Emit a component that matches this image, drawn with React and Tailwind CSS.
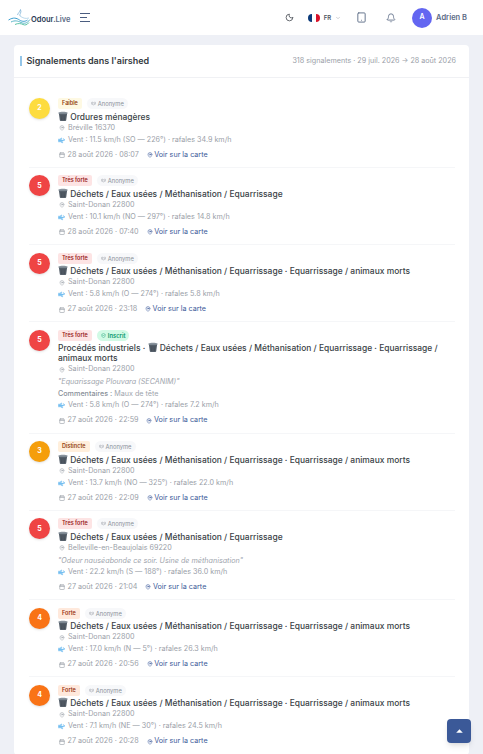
import { Moon, ChevronDown, Tablet, Bell, Calendar, MapPin, Wind, VenetianMask, ShieldCheck } from 'lucide-react';

const ALL = 'Déchets / Eaux usées / Méthanisation / Equarrissage · Equarrissage / animaux morts';

const levels = {
  2: { label: 'Faible', circle: 'bg-[#fddc3f]', badge: 'bg-[#fef9e3] text-[#92400e]' },
  3: { label: 'Distincte', circle: 'bg-[#f59e0b]', badge: 'bg-[#ffefdc] text-[#92400e]' },
  4: { label: 'Forte', circle: 'bg-[#f97316]', badge: 'bg-[#ffe9dc] text-[#9a3412]' },
  5: { label: 'Très forte', circle: 'bg-[#ef4444]', badge: 'bg-[#fde4e4] text-[#991b1b]' },
};

const reports = [
  { level: 2, title: 'Ordures ménagères', place: 'Bréville 16370', wind: 'Vent : 11.5 km/h (SO — 226°) · rafales 34.9 km/h', date: '28 août 2026 · 08:07' },
  { level: 5, title: 'Déchets / Eaux usées / Méthanisation / Equarrissage', place: 'Saint-Donan 22800', wind: 'Vent : 10.1 km/h (NO — 297°) · rafales 14.8 km/h', date: '28 août 2026 · 07:40' },
  { level: 5, title: ALL, place: 'Saint-Donan 22800', wind: 'Vent : 5.8 km/h (O — 274°) · rafales 5.8 km/h', date: '27 août 2026 · 23:18' },
  {
    level: 5,
    inscrit: true,
    prefix: 'Procédés industriels · ',
    title: ALL,
    place: 'Saint-Donan 22800',
    quote: '"Equarissage Plouvara (SECANIM)"',
    comment: 'Maux de tête',
    wind: 'Vent : 5.8 km/h (O — 274°) · rafales 7.2 km/h',
    date: '27 août 2026 · 22:59',
  },
  { level: 3, title: ALL, place: 'Saint-Donan 22800', wind: 'Vent : 13.7 km/h (NO — 325°) · rafales 22.0 km/h', date: '27 août 2026 · 22:09' },
  {
    level: 5,
    title: 'Déchets / Eaux usées / Méthanisation / Equarrissage',
    place: 'Belleville-en-Beaujolais 69220',
    quote: '"Odeur nauséabonde ce soir. Usine de méthanisation"',
    wind: 'Vent : 22.2 km/h (S — 188°) · rafales 36.0 km/h',
    date: '27 août 2026 · 21:04',
  },
  { level: 4, title: ALL, place: 'Saint-Donan 22800', wind: 'Vent : 17.0 km/h (N — 5°) · rafales 26.3 km/h', date: '27 août 2026 · 20:56' },
  { level: 4, title: ALL, place: 'Saint-Donan 22800', wind: 'Vent : 7.1 km/h (NE — 30°) · rafales 24.5 km/h', date: '27 août 2026 · 20:28' },
];

function Logo() {
  return (
    <svg width="23" height="18" viewBox="0 0 23 18" fill="none" className="shrink-0">
      <path d="M12 7C11 5 14 4 12.5 0.5 12 3 10 4 9.5 6" stroke="#7fb4d8" strokeWidth="0.8" />
      <path d="M0.5 11c5-3 8-2 11 0s6 1.5 8 0" stroke="#3d9fd0" strokeWidth="1" />
      <path d="M3 13c4-2 7-1 10 .5s6 1 9-3" stroke="#58b6c8" strokeWidth="1" />
      <path d="M7 15.5c3-1.5 6-1 8 0s4 .5 6-2" stroke="#5fc4a8" strokeWidth="1" />
      <path d="M12 7c3 2 5 3 9 2" stroke="#9cc8e4" strokeWidth="0.7" />
    </svg>
  );
}

function Bin() {
  return (
    <svg width="10" height="10" viewBox="0 0 10 10" className="inline-block align-[-1.5px]">
      <path d="M0.8 2h8.4l-1 7.2a1 1 0 0 1-1 .8H2.8a1 1 0 0 1-1-.8z" fill="#56606b" />
      <path d="M0.4 1.6C2 .3 8 .3 9.6 1.6L9.2 2.8H.8z" fill="#8a949e" />
      <path d="M3 4l.5 5M5 4v5M7 4l-.5 5" stroke="#3d454e" strokeWidth="0.6" />
    </svg>
  );
}

function Report({ report }) {
  const level = levels[report.level];
  return (
    <div className="flex gap-[8px] border-b border-[#f5f6f8] pt-[6px] pb-[6.25px]">
      <span className={`mt-[1.5px] flex h-[21px] w-[21px] shrink-0 items-center justify-center rounded-full text-[7px] font-bold text-white shadow-sm ${level.circle}`}>
        {report.level}
      </span>
      <div className="mt-[1.5px] min-w-0 flex-1">
        <div className="flex h-[11px] items-center gap-[5px]">
          <span className={`rounded-[2px] px-[4px] text-[5.5px] leading-[11px] font-semibold ${level.badge}`}>{level.label}</span>
          {report.inscrit ? (
            <span className="flex items-center gap-[2px] rounded-full bg-[#d1fae5] px-[4px] text-[5.8px] leading-[11px] font-semibold text-[#059669]">
              <ShieldCheck size={5} />
              Inscrit
            </span>
          ) : (
            <span className="flex items-center gap-[2px] rounded-full bg-[#f7f8fa] px-[4px] text-[5.8px] leading-[11px] text-[#8a9099]">
              <VenetianMask size={5} />
              Anonyme
            </span>
          )}
        </div>
        <div className="mt-[1.5px] text-[8.45px] leading-[10px] font-medium text-[#3a3f46]">
          {report.prefix}
          <Bin /> {report.title}
        </div>
        <div className="mt-[1.5px] flex h-[11px] items-center gap-[3px] text-[7.2px] text-[#9aa0a8]">
          <MapPin size={6} className="mx-[0.5px]" />
          {report.place}
        </div>
        {report.quote && <div className="mt-[1px] h-[11px] text-[7.2px] leading-[11px] text-[#a0a5ad] italic">{report.quote}</div>}
        {report.comment && (
          <div className="mt-[1px] h-[11px] text-[7.2px] leading-[11px] text-[#a0a5ad]">
            <span className="font-medium text-[#8a9099]">Commentaires :</span> {report.comment}
          </div>
        )}
        <div className="mt-[1px] flex h-[11px] items-center gap-[3px] text-[7.2px] text-[#9aa0a8]">
          <Wind size={7} strokeWidth={3} className="text-[#60b5ee]" />
          {report.wind}
        </div>
        <div className="mt-[4px] flex h-[11px] items-center text-[7.2px] text-[#9aa0a8]">
          <Calendar size={6} strokeWidth={2.5} className="mr-[3px] ml-[0.5px]" />
          {report.date}
          <span className="ml-[8px] flex items-center gap-[1.5px] text-[#3b5998]">
            <MapPin size={6} />
            Voir sur la carte
          </span>
        </div>
      </div>
    </div>
  );
}

export default function App() {
  return (
    <div className="relative h-screen overflow-hidden bg-[#eef0f6] font-['Inter',sans-serif]">
      {/* Top bar */}
      <div className="flex h-[35px] items-center bg-white pr-[16px] pl-[8px]">
        <Logo />
        <span className="mt-[5px] text-[7.5px] font-semibold text-[#2b3a55]">
          Odour<span className="text-[#5b6b85]">.Live</span>
        </span>
        <div className="ml-[10px] flex w-[10px] flex-col gap-[2.5px]">
          <span className="h-[1.5px] w-[10px] bg-[#4b5d80]" />
          <span className="h-[1.5px] w-[7px] bg-[#4b5d80]" />
          <span className="h-[1.5px] w-[10px] bg-[#4b5d80]" />
        </div>
        <div className="ml-auto flex items-center">
          <Moon size={9} className="text-[#3a3f47]" />
          <span className="ml-[14px] flex h-[8px] w-[12px] overflow-hidden rounded-full">
            <span className="w-1/3 bg-[#0a3a7a]" />
            <span className="w-1/3 bg-white" />
            <span className="w-1/3 bg-[#d8132a]" />
          </span>
          <span className="ml-[4px] text-[6px] font-semibold text-[#4b5563]">FR</span>
          <ChevronDown size={6} className="ml-[4px] text-[#a0a5ad]" />
          <Tablet size={11} className="ml-[15px] text-[#5b6b85]" />
          <Bell size={10} className="ml-[19px] text-[#5b6b85]" />
          <span className="ml-[16px] flex h-[20px] w-[20px] items-center justify-center rounded-full bg-[#6366f1] text-[7px] font-semibold text-white">A</span>
          <span className="ml-[4px] text-[7.5px] font-semibold text-[#5b6b85]">Adrien B</span>
        </div>
      </div>

      {/* Card */}
      <div className="mx-[14px] mt-[10px] rounded-[4px] bg-white">
        <div className="flex h-[33px] items-center justify-between border-b border-[#f0f1f4] pr-[13px] pl-[6px]">
          <div className="flex items-center gap-[4.5px]">
            <span className="h-[10.5px] w-[2px] bg-[#93c5e8]" />
            <h2 className="text-[9px] font-semibold text-[#343a40]">Signalements dans l'airshed</h2>
          </div>
          <span className="text-[7.2px] text-[#9aa0a8]">318 signalements · 29 juil. 2026 → 28 août 2026</span>
        </div>
        <div className="pt-[12.5px] pr-[14px] pl-[15px]">
          {reports.map((report, i) => (
            <Report key={i} report={report} />
          ))}
        </div>
      </div>

      {/* Back to top */}
      <button className="absolute right-[12px] bottom-[11px] flex h-[24px] w-[24px] items-center justify-center rounded-[4px] bg-[#3b5998] shadow-md">
        <svg width="7" height="4" viewBox="0 0 7 4" fill="white">
          <path d="M3.5 0.3 6.8 3.7H0.2z" />
        </svg>
      </button>
    </div>
  );
}
